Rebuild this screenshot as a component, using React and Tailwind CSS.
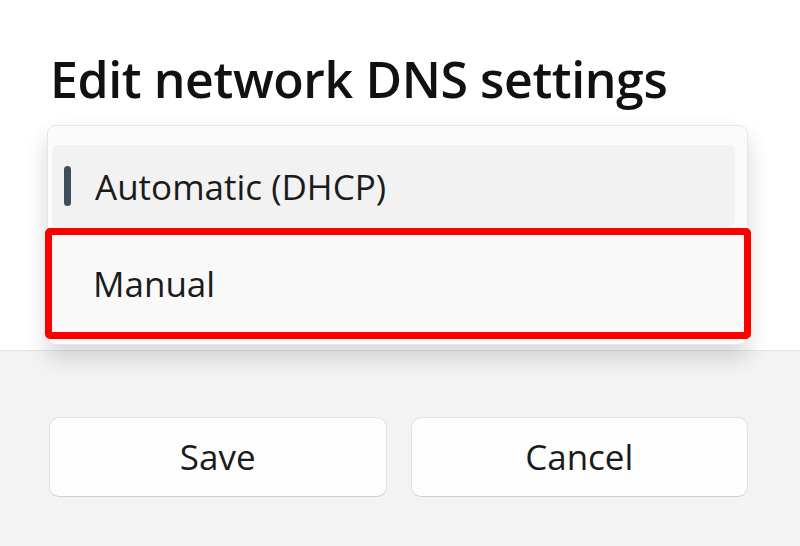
import React from "react";

export default function App() {
  return (
    <div className="w-[800px] h-[546px] bg-white flex flex-col overflow-hidden font-['Open_Sans',sans-serif] text-[#1b1b1b]">
      <div className="relative z-10 h-[350px] shrink-0 pl-[47px] pt-[51px]">
        <h1 className="ml-[3px] text-[50px] font-semibold leading-[56px] tracking-[-0.4px] text-[#111]">
          Edit network DNS settings
        </h1>
        <div className="mt-[18px] w-[701px] h-[220px] rounded-[9px] border border-[#e6e6e6] bg-[#fbfbfb] shadow-[0_12px_22px_rgba(0,0,0,0.16)] pt-[19px]">
          <div className="ml-[4px] mr-[12px] h-[82px] rounded-[6px] bg-[#f2f2f2] flex items-center">
            <div className="ml-[12px] w-[7px] h-[40px] rounded-full bg-[#3d4e5c]" />
            <span className="ml-[24px] text-[35px] leading-none">Automatic (DHCP)</span>
          </div>
          <div className="-ml-[3px] mt-[1px] w-[706px] h-[111px] rounded-[5px] border-[7px] border-[#fe0000] bg-[#f9f9f9] flex items-center">
            <span className="ml-[41px] text-[35px] leading-none">Manual</span>
          </div>
        </div>
      </div>
      <div className="flex-1 bg-[#f3f3f3] border-t border-[#e4e4e4] pl-[49px] pr-[52px] pt-[66px] flex gap-[24px]">
        <button className="w-[338px] h-[80px] rounded-[10px] border border-[#e2e2e2] border-b-[#cfcfcf] bg-[#fdfdfd] text-[35px] text-[#1b1b1b]">
          Save
        </button>
        <button className="w-[338px] h-[80px] rounded-[10px] border border-[#e2e2e2] border-b-[#cfcfcf] bg-[#fdfdfd] text-[35px] text-[#1b1b1b]">
          Cancel
        </button>
      </div>
    </div>
  );
}
